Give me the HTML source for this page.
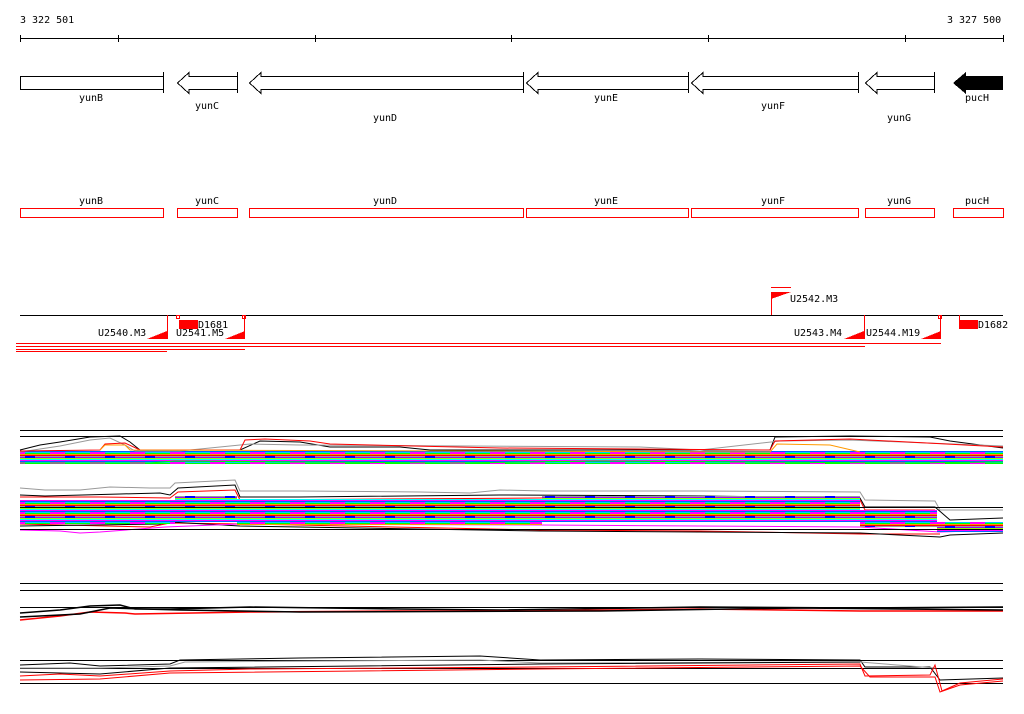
<!DOCTYPE html>
<html><head><style>
html,body{margin:0;padding:0;background:#fff;width:1024px;height:714px;overflow:hidden}
svg text{font-family:"DejaVu Sans Mono","Liberation Mono",monospace;font-size:10px;fill:#000}
</style></head><body>
<svg width="1024" height="714" viewBox="0 0 1024 714" xmlns="http://www.w3.org/2000/svg" shape-rendering="crispEdges">
<defs>
<pattern id="st" width="40" height="10" patternUnits="userSpaceOnUse">
<rect y="0" width="40" height="1" fill="#f0f"/><rect y="1" width="40" height="1" fill="#06f"/>
<rect y="2" width="40" height="1" fill="#0cf"/><rect y="3" width="40" height="1" fill="#0f0"/>
<rect y="4" width="40" height="1" fill="#f90"/><rect y="5" width="40" height="1" fill="#f00"/>
<rect y="6" width="40" height="1" fill="#999"/><rect y="7" width="40" height="1" fill="#90f"/>
<rect y="8" width="40" height="1" fill="#9f0"/><rect y="9" width="40" height="1" fill="#0ff"/>
<rect x="10" y="2" width="15" height="2" fill="#f0f"/><rect x="25" y="6" width="10" height="2" fill="#00f"/>
</pattern>
</defs>
<text x="20" y="23">3 322 501</text>
<text x="947" y="23">3 327 500</text>
<g stroke="#000" fill="none">
<line x1="20" y1="38.5" x2="1003" y2="38.5"/>
<line x1="20.5" y1="35" x2="20.5" y2="42"/><line x1="118.5" y1="35" x2="118.5" y2="42"/>
<line x1="315.5" y1="35" x2="315.5" y2="42"/><line x1="511.5" y1="35" x2="511.5" y2="42"/>
<line x1="708.5" y1="35" x2="708.5" y2="42"/><line x1="905.5" y1="35" x2="905.5" y2="42"/>
<line x1="1003.5" y1="35" x2="1003.5" y2="42"/>
<rect x="20.5" y="76.5" width="143" height="13"/><line x1="163.5" y1="72" x2="163.5" y2="93"/>
<polygon points="237.5,76.5 189,76.5 189,72.5 177.5,83 189,93.5 189,89.5 237.5,89.5"/><line x1="237.5" y1="72" x2="237.5" y2="93"/>
<polygon points="523.5,76.5 261,76.5 261,72.5 249.5,83 261,93.5 261,89.5 523.5,89.5"/><line x1="523.5" y1="72" x2="523.5" y2="93"/>
<polygon points="688.5,76.5 538,76.5 538,72.5 526.5,83 538,93.5 538,89.5 688.5,89.5"/><line x1="688.5" y1="72" x2="688.5" y2="93"/>
<polygon points="858.5,76.5 703,76.5 703,72.5 691.5,83 703,93.5 703,89.5 858.5,89.5"/><line x1="858.5" y1="72" x2="858.5" y2="93"/>
<polygon points="934.5,76.5 877,76.5 877,72.5 865.5,83 877,93.5 877,89.5 934.5,89.5"/><line x1="934.5" y1="72" x2="934.5" y2="93"/>
</g>
<polygon points="1003,76 966,76 966,72 953,83 966,94 966,90 1003,90" fill="#000"/>
<text x="79" y="101">yunB</text><text x="195" y="109">yunC</text><text x="373" y="121">yunD</text>
<text x="594" y="101">yunE</text><text x="761" y="109">yunF</text><text x="887" y="121">yunG</text><text x="965" y="101">pucH</text>
<g stroke="#f00" fill="none">
<rect x="20.5" y="208.5" width="143" height="9"/><rect x="177.5" y="208.5" width="60" height="9"/>
<rect x="249.5" y="208.5" width="274" height="9"/><rect x="526.5" y="208.5" width="162" height="9"/>
<rect x="691.5" y="208.5" width="167" height="9"/><rect x="865.5" y="208.5" width="69" height="9"/>
<rect x="953.5" y="208.5" width="50" height="9"/>
</g>
<text x="79" y="204">yunB</text><text x="195" y="204">yunC</text><text x="373" y="204">yunD</text>
<text x="594" y="204">yunE</text><text x="761" y="204">yunF</text><text x="887" y="204">yunG</text><text x="965" y="204">pucH</text>
<!-- transcripts -->
<line x1="20" y1="315.5" x2="1003" y2="315.5" stroke="#000"/>
<g fill="#f00">
<polygon points="147,339 167,331 167,339"/><polygon points="225,339 245,331 245,339"/>
<polygon points="844,339 864,331 864,339"/><polygon points="921,339 941,331 941,339"/>
<polygon points="771,292 791,292 771,299"/>
<rect x="179" y="320" width="19" height="9"/><rect x="959" y="320" width="19" height="9"/>
</g>
<g stroke="#f00" fill="none">
<line x1="167.5" y1="315" x2="167.5" y2="339"/><line x1="244.5" y1="315" x2="244.5" y2="339"/>
<line x1="864.5" y1="315" x2="864.5" y2="339"/><line x1="940.5" y1="315" x2="940.5" y2="339"/>
<line x1="771.5" y1="292" x2="771.5" y2="315"/><line x1="771" y1="287.5" x2="791" y2="287.5"/>
<rect x="176.5" y="315.5" width="3" height="3"/><rect x="242.5" y="315.5" width="3" height="3"/><rect x="938.5" y="315.5" width="3" height="3"/>
<line x1="959.5" y1="315" x2="959.5" y2="320"/>
<line x1="16" y1="343.5" x2="941" y2="343.5"/><line x1="16" y1="346.5" x2="865" y2="346.5"/>
<line x1="16" y1="349.5" x2="245" y2="349.5"/><line x1="16" y1="351.5" x2="167" y2="351.5"/>
</g>
<text x="98" y="336">U2540.M3</text><text x="176" y="336">U2541.M5</text><text x="198" y="328">D1681</text>
<text x="790" y="302">U2542.M3</text><text x="794" y="336">U2543.M4</text><text x="866" y="336">U2544.M19</text><text x="978" y="328">D1682</text>
<!-- expression group 1 -->
<g stroke="#000" fill="none"><line x1="20" y1="430.5" x2="1003" y2="430.5"/><line x1="20" y1="436.5" x2="1003" y2="436.5"/></g>
<rect x="20" y="451" width="983" height="13" fill="url(#st)"/>
<g fill="none" shape-rendering="auto">
<polyline stroke="#000" points="20,450 40,445 60,442 90,437 120,436 130,442 140,450 240,450 260,441 300,442 330,447 400,447 430,450 770,450 775,437 850,436 930,437 950,441 1003,448"/>
<polyline stroke="#999" points="20,452 60,446 90,440 110,438 125,445 135,451 180,451 250,444 300,445 640,447 700,450 780,441 850,440 1003,446"/>
<polyline stroke="#f00" points="20,451 100,450 105,444 125,443 140,450 240,450 245,440 265,439 310,441 330,444 500,448 770,450 775,441 850,439 1003,447"/>
<polyline stroke="#f90" points="100,450 105,445 125,445 130,450 770,452 777,444 830,445 860,452"/>
<polyline stroke="#0f0" points="20,463 150,463 175,461 300,462 450,463 600,461 900,463 1003,462"/>
</g>
<!-- group 2 -->
<g fill="none" shape-rendering="auto">
<polyline stroke="#999" points="20,488 45,490 80,490 110,487 150,488 170,488 175,483 235,480 240,491 300,491 420,492 470,493 500,490 545,491 700,491 860,492 865,500 935,501 940,510 1003,510"/>
<polyline stroke="#000" points="20,495 45,496 120,494 160,493 170,495 178,488 235,485 240,497 300,497 500,495 700,496 860,498 865,507 935,507 950,520 1003,518"/>
<polyline stroke="#f00" points="20,497 100,497 170,498 178,492 235,490 240,500 540,498 700,497 860,500 865,510 935,510"/>
<polyline stroke="#f00" points="20,524 150,527 170,523 245,524 540,530 700,531 860,534 940,534"/>
<polyline stroke="#000" points="20,526 160,524 170,522 240,526 540,531 860,533 940,537 950,535 1003,533"/>
<polyline stroke="#f0f" points="20,530 60,531 80,533 100,532 165,527 240,524 540,525 860,527 940,532 1003,530"/>
</g>
<rect x="20" y="500" width="155" height="24" fill="url(#st)"/>
<rect x="175" y="496" width="62" height="26" fill="url(#st)"/>
<rect x="237" y="499" width="305" height="26" fill="url(#st)"/>
<rect x="542" y="496" width="318" height="26" fill="url(#st)"/>
<rect x="860" y="510" width="77" height="17" fill="url(#st)"/>
<rect x="937" y="522" width="66" height="10" fill="url(#st)"/>
<g stroke="#000" fill="none"><line x1="20" y1="507.5" x2="1003" y2="507.5"/><line x1="20" y1="529.5" x2="1003" y2="529.5"/></g>
<!-- group 3 -->
<g stroke="#000" fill="none"><line x1="20" y1="583.5" x2="1003" y2="583.5"/><line x1="20" y1="590.5" x2="1003" y2="590.5"/></g>
<g fill="none" shape-rendering="auto" stroke-width="1.5">
<polyline stroke="#000" points="20,613 60,610 90,606 120,605 135,609 170,609 250,607 400,609 500,610 700,607 860,608 1003,607"/>
<polyline stroke="#f00" points="20,620 60,616 90,612 125,613 135,614 250,612 400,611 520,611 700,609 860,611 1003,611"/>
<polyline stroke="#000" points="20,617 80,614 110,608 180,610 300,612 600,611 800,608 1003,610"/>
</g>
<line x1="20" y1="607.5" x2="1003" y2="607.5" stroke="#000"/>
<!-- group 4 -->
<g stroke="#000" fill="none"><line x1="20" y1="660.5" x2="1003" y2="660.5"/><line x1="20" y1="668.5" x2="1003" y2="668.5"/><line x1="20" y1="683.5" x2="1003" y2="683.5"/></g>
<g fill="none" shape-rendering="auto">
<polyline stroke="#000" points="20,665 70,663 100,666 170,664 180,660 300,658 480,656 540,660 700,659 860,660 865,667 930,667 940,680 1003,678"/>
<polyline stroke="#999" points="20,668 100,668 170,666 185,662 480,660 540,663 860,662 935,668"/>
<polyline stroke="#f00" points="20,676 60,674 100,676 170,671 250,669 540,667 860,664 865,676 930,675 935,665 942,691 960,683 1003,679"/>
<polyline stroke="#f00" points="20,680 100,679 170,673 540,669 860,666 870,677 935,677 940,692 960,685 1003,681"/>
<polyline stroke="#000" points="20,672 100,674 170,668 540,664 860,662"/>
</g>
</svg>
</body></html>
